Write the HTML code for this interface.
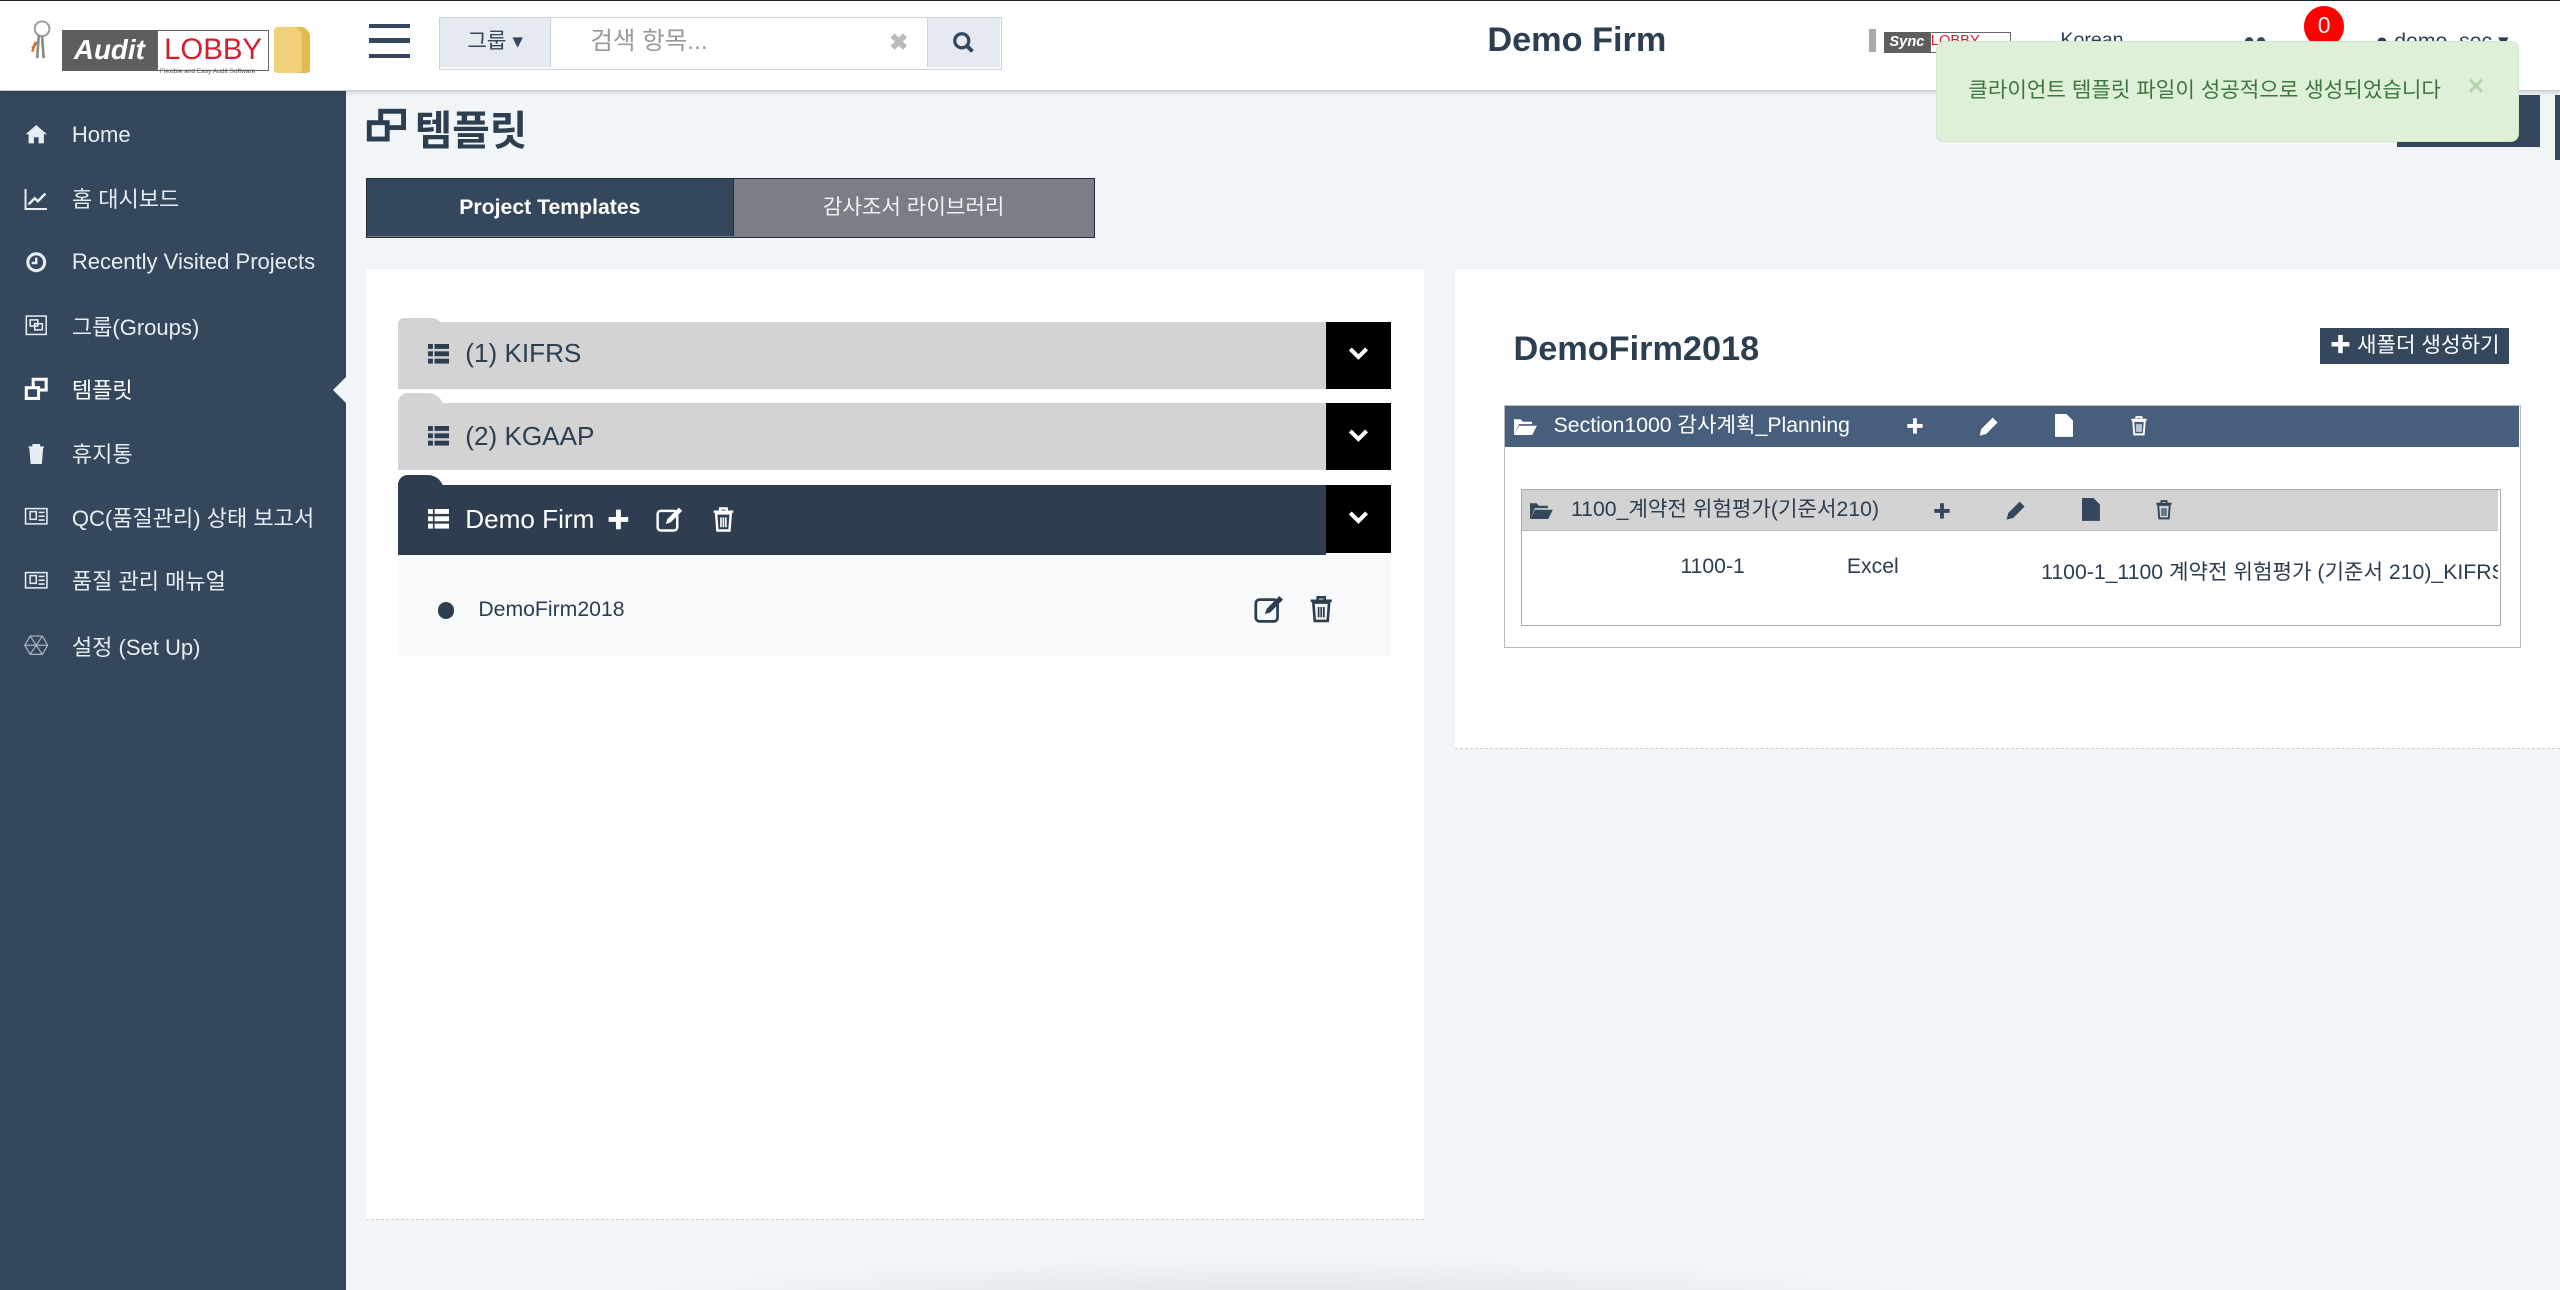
<!DOCTYPE html>
<html><head><meta charset="utf-8"><style>
*{box-sizing:border-box;margin:0;padding:0}
html,body{width:2560px;height:1290px;overflow:hidden;background:#f1f5f8}
#w{width:1568px;height:790px;zoom:1.63265;position:relative;font-family:"Liberation Sans","Noto Sans CJK KR",sans-serif;color:#2c3e50;background:#f1f5f8}
.abs{position:absolute}
#hdr{left:0;top:0;width:1568px;height:56px;background:#fff;border-top:1px solid #222;border-bottom:1px solid #ccc;box-shadow:0 1px 3px rgba(0,0,0,.15);z-index:3}
#side{left:0;top:56px;width:212px;height:734px;background:#34475c}
.nav{position:absolute;left:0;height:39px;width:212px;color:#e8edf2;font-size:13.5px;display:flex;align-items:center}
.nav .ic{width:44px;display:flex;justify-content:center;padding-left:0}
.nav .ic svg{width:15px;height:15px}
</style></head><body><div id="w">
<svg width="0" height="0" style="position:absolute"><defs>
<g id="lst"><rect x="0" y="0" width="3" height="3"/><rect x="4" y="0" width="9" height="3"/><rect x="0" y="4.5" width="3" height="3"/><rect x="4" y="4.5" width="9" height="3"/><rect x="0" y="9" width="3" height="3"/><rect x="4" y="9" width="9" height="3"/></g>
<g id="fold"><path d="M0 2h4l1.5 1.5H11V5H3L0 12z"/><path d="M3 6h11l-3 6H0z"/></g>
</defs></svg>
<div id="hdr" class="abs">
 <div class="abs" style="left:18px;top:11px;width:14px;height:26px">
  <svg width="14" height="26" viewBox="0 0 14 26"><circle cx="8" cy="6" r="4.5" fill="none" stroke="#999" stroke-width="1.2"/><path d="M6 10 L5 24 M8 11 L9 24 M5 14 L2 18" stroke="#888" stroke-width="1.6"/><path d="M2 20 L4 14" stroke="#e07020" stroke-width="1.5"/></svg></div>
 <div class="abs" style="left:38px;top:18px;width:58px;height:25px;background:#5e5e5e;color:#fff;font-weight:bold;font-style:italic;font-size:17px;line-height:25px;text-align:center">Audit</div>
 <div class="abs" style="left:96px;top:18px;width:69px;height:25px;border:1px solid #666;background:#fff;color:#d11f2f;font-size:18px;line-height:23px;text-align:center">LOBBY</div>
 <div class="abs" style="left:98px;top:41px;font-size:4px;color:#555">Flexible and Easy Audit Software</div>
 <div class="abs" style="left:168px;top:16px;width:22px;height:28px;background:#f1d07a;border-radius:2px 6px 2px 2px;box-shadow:inset -5px 0 0 #e2b954"></div>
 <div class="abs" style="left:226px;top:14px;width:25px;height:21px;border-top:3px solid #34475c;border-bottom:3px solid #34475c"><div style="margin-top:6px;height:3px;background:#34475c"></div></div>
 <div class="abs" style="left:269px;top:10px;width:345px;height:32px;border:1px solid #c8d3dc;background:#fff">
  <div class="abs" style="left:0;top:0;width:68px;height:30px;background:#e4eaf0;border-right:1px solid #c8d3dc;font-size:13px;line-height:30px;text-align:center;color:#34475c">그룹 ▾</div>
  <div class="abs" style="left:92px;top:0;font-size:15px;line-height:30px;color:#999">검색 항목...</div>
  <div class="abs" style="left:275px;top:0;font-size:14px;line-height:30px;color:#bbb;font-weight:bold">✖</div>
  <div class="abs" style="left:298px;top:0;width:45px;height:30px;background:#e4eaf0;border-left:1px solid #c8d3dc">
   <svg class="abs" style="left:15px;top:8px" width="14" height="14" viewBox="0 0 14 14"><circle cx="6" cy="6" r="4.3" fill="none" stroke="#34475c" stroke-width="2"/><path d="M9 9l3.5 3.5" stroke="#34475c" stroke-width="2.4"/></svg></div>
 </div>
 <div class="abs" style="left:911px;top:12px;font-size:21px;font-weight:bold;color:#2c3e50">Demo Firm</div>
 <div class="abs" style="left:1145px;top:17px;width:4px;height:14px;background:#aaa"></div>
 <div class="abs" style="left:1154px;top:19px;width:28px;height:13px;background:#5e5e5e;color:#fff;font-size:9px;font-style:italic;font-weight:bold;line-height:13px;text-align:center">Sync</div>
 <div class="abs" style="left:1182px;top:19px;width:50px;height:13px;border:1px solid #666;background:#fff;color:#d11f2f;font-size:9px;line-height:11px">LOBBY</div>
 <div class="abs" style="left:1262px;top:17px;font-size:12px;color:#2c3e50">Korean</div>
 <div class="abs" style="left:1374px;top:18px;font-size:12px;color:#34475c">●●</div>
 <div class="abs" style="left:1411px;top:3px;width:25px;height:25px;border-radius:50%;background:#f00;color:#fff;font-size:14px;text-align:center;line-height:24px">0</div>
 <div class="abs" style="left:1455px;top:17px;font-size:13px;color:#2c3e50">● demo_sec ▾</div>
</div>
<div class="abs" style="left:1186px;top:25px;width:357px;height:62px;background:#dff0d8;border:1px solid #d0e6c6;border-radius:5px;z-index:5">
 <div class="abs" style="left:19px;top:19px;font-size:13px;color:#3c763d">클라이언트 템플릿 파일이 성공적으로 생성되었습니다</div>
 <div class="abs" style="left:325px;top:17px;font-size:17px;color:#b5d3ac;font-weight:bold">×</div>
</div>
<div class="abs" style="left:1468px;top:58px;width:88px;height:32px;background:#34475c"></div>
<div class="abs" style="left:1565px;top:58px;width:3px;height:40px;background:#34475c"></div>

<div id="side" class="abs">
 <div class="nav" style="top:7px"><span class="ic"><svg viewBox="0 0 16 16"><path d="M1 8L8 2l7 6h-2v6h-3.5v-4h-3v4H3V8z" fill="#e8edf2"/></svg></span>Home</div>
 <div class="nav" style="top:46px"><span class="ic"><svg viewBox="0 0 16 16"><path d="M1 2v13h14" stroke="#e8edf2" fill="none" stroke-width="1.3"/><path d="M3 12l4-4 2 2 5-5" stroke="#e8edf2" fill="none" stroke-width="1.6"/></svg></span>홈 대시보드</div>
 <div class="nav" style="top:85px"><span class="ic"><svg viewBox="0 0 16 16"><circle cx="8" cy="8" r="5.5" stroke="#e8edf2" fill="none" stroke-width="2"/><path d="M8 5v3.5h-3" stroke="#e8edf2" fill="none" stroke-width="1.6"/></svg></span>Recently Visited Projects</div>
 <div class="nav" style="top:124px"><span class="ic"><svg viewBox="0 0 16 16"><rect x="1.5" y="2" width="13" height="12" stroke="#e8edf2" fill="none"/><rect x="4" y="4.5" width="5" height="4" stroke="#e8edf2" fill="none"/><rect x="7" y="7" width="5" height="4" stroke="#e8edf2" fill="none"/></svg></span>그룹(Groups)</div>
 <div class="nav" style="top:163px;color:#fff"><span class="ic"><svg viewBox="0 0 16 16"><rect x="6" y="1.5" width="8.5" height="7" stroke="#fff" fill="none" stroke-width="2"/><rect x="1.5" y="7" width="8" height="7" stroke="#fff" fill="#34475c" stroke-width="2"/></svg></span>템플릿</div>
 <div class="abs" style="left:204px;top:175px;width:0;height:0;border-top:8px solid transparent;border-bottom:8px solid transparent;border-right:8px solid #f1f5f8"></div>
 <div class="nav" style="top:202px"><span class="ic"><svg viewBox="0 0 16 16"><path d="M3 4h10M6 4V2.5h4V4M4 5h8l-.8 9.5H4.8z" stroke="#e8edf2" fill="#e8edf2" stroke-width="1"/></svg></span>휴지통</div>
 <div class="nav" style="top:241px"><span class="ic"><svg viewBox="0 0 16 16"><rect x="1" y="3" width="14" height="10" stroke="#e8edf2" fill="none"/><rect x="4" y="5" width="4" height="5" stroke="#e8edf2" fill="none"/><path d="M9.5 5.5h4M9.5 8h4M9.5 10.5h4" stroke="#e8edf2"/></svg></span>QC(품질관리) 상태 보고서</div>
 <div class="nav" style="top:280px"><span class="ic"><svg viewBox="0 0 16 16"><rect x="1" y="3" width="14" height="10" stroke="#e8edf2" fill="none"/><rect x="4" y="5" width="4" height="5" stroke="#e8edf2" fill="none"/><path d="M9.5 5.5h4M9.5 8h4M9.5 10.5h4" stroke="#e8edf2"/></svg></span>품질 관리 매뉴얼</div>
 <div class="nav" style="top:320px"><span class="ic"><svg viewBox="0 0 16 16"><path d="M4 2h8l3.5 6-3.5 6H4L.5 8z M4 2l8 12 M12 2L4 14 M.5 8h15" stroke="#a8b4c0" fill="none" stroke-width=".8"/></svg></span>설정 (Set Up)</div>
</div>

<svg class="abs" style="left:224px;top:66px" width="25" height="21" viewBox="0 0 25 21"><rect x="9" y="2" width="14" height="10" stroke="#2c3e50" fill="none" stroke-width="3"/><rect x="2" y="9" width="11" height="10" stroke="#2c3e50" fill="#f1f5f8" stroke-width="3"/></svg>
<div class="abs" style="left:254px;top:60px;font-size:25px;font-weight:bold;color:#2c3e50">템플릿</div>
<div class="abs" style="left:224px;top:109px;width:447px;height:37px;border:1px solid #1f2d3a;background:#7a7f87">
 <div class="abs" style="left:0;top:0;width:225px;height:35px;background:#34475c;border-right:1px solid #1f2d3a;color:#fff;font-size:13px;font-weight:bold;text-align:center;line-height:35px">Project Templates</div>
 <div class="abs" style="left:225px;top:0;width:220px;height:35px;color:#f1f1f1;font-size:13px;text-align:center;line-height:35px">감사조서 라이브러리</div>
</div>

<div class="abs" style="left:224px;top:165px;width:648px;height:582px;background:#fff;border-bottom:1px dashed #ccc">
 <div class="abs" style="left:20px;top:30px;width:28px;height:8px;background:#d3d3d3;border-radius:4px 8px 0 0"></div>
 <div class="abs" style="left:20px;top:32px;width:568px;height:41px;background:#d3d3d3"></div>
 <div class="abs" style="left:588px;top:32px;width:40px;height:41px;background:#000"></div>
 <svg class="abs" style="left:38px;top:46px" width="13" height="12" viewBox="0 0 13 12" fill="#2c3e50"><use href="#lst"/></svg>
 <div class="abs" style="left:61px;top:42px;font-size:16px;color:#2c3e50">(1) KIFRS</div>
 <div class="abs" style="left:20px;top:76px;width:28px;height:10px;background:#d3d3d3;border-radius:6px 10px 0 0"></div>
 <div class="abs" style="left:20px;top:82px;width:568px;height:41px;background:#d3d3d3"></div>
 <div class="abs" style="left:588px;top:82px;width:40px;height:41px;background:#000"></div>
 <svg class="abs" style="left:38px;top:96px" width="13" height="12" viewBox="0 0 13 12" fill="#2c3e50"><use href="#lst"/></svg>
 <div class="abs" style="left:61px;top:93px;font-size:16px;color:#2c3e50">(2) KGAAP</div>
 <div class="abs" style="left:20px;top:126px;width:28px;height:12px;background:#2e3e50;border-radius:6px 10px 0 0"></div>
 <div class="abs" style="left:20px;top:132px;width:568px;height:43px;background:#2e3e50"></div>
 <div class="abs" style="left:588px;top:132px;width:40px;height:42px;background:#000"></div>
 <svg class="abs" style="left:38px;top:147px" width="13" height="12" viewBox="0 0 13 12" fill="#fff"><use href="#lst"/></svg>
 <div class="abs" style="left:61px;top:144px;font-size:16px;color:#fff">Demo Firm</div>
 <svg class="abs" style="left:148px;top:146px" width="14" height="14" viewBox="0 0 14 14"><path d="M7 1v12M1 7h12" stroke="#fff" stroke-width="3"/></svg>
 <svg class="abs" style="left:178px;top:145px" width="18" height="16" viewBox="0 0 18 16"><rect x="1" y="3" width="12" height="12" rx="2" stroke="#fff" fill="none" stroke-width="1.5"/><path d="M6 11l1-3 7-7 2 2-7 7z" fill="#fff"/></svg>
 <svg class="abs" style="left:212px;top:145px" width="14" height="16" viewBox="0 0 14 16"><path d="M1 3.5h12M5 3.5V1.5h4v2M2.5 4.5h9l-.8 10.5H3.3z" stroke="#fff" fill="none" stroke-width="1.5"/><path d="M5.5 7v6M7 7v6M8.5 7v6" stroke="#fff"/></svg>
 <svg class="abs" style="left:601px;top:46px" width="14" height="12" viewBox="0 0 14 12"><path d="M2 3l5 5 5-5" stroke="#fff" fill="none" stroke-width="2.5"/></svg>
 <svg class="abs" style="left:601px;top:96px" width="14" height="12" viewBox="0 0 14 12"><path d="M2 3l5 5 5-5" stroke="#fff" fill="none" stroke-width="2.5"/></svg>
 <svg class="abs" style="left:601px;top:146px" width="14" height="12" viewBox="0 0 14 12"><path d="M2 3l5 5 5-5" stroke="#fff" fill="none" stroke-width="2.5"/></svg>
 <div class="abs" style="left:20px;top:175px;width:608px;height:62px;background:#f7f9fb">
  <div class="abs" style="left:24px;top:29px;width:10px;height:10px;border-radius:50%;background:#2c3e50"></div>
  <div class="abs" style="left:49px;top:26px;font-size:13px;color:#2c3e50">DemoFirm2018</div>
  <svg class="abs" style="left:524px;top:24px" width="20" height="18" viewBox="0 0 18 16"><rect x="1" y="3" width="12" height="12" rx="2" stroke="#2c3e50" fill="none" stroke-width="1.5"/><path d="M6 11l1-3 7-7 2 2-7 7z" fill="#2c3e50"/></svg>
  <svg class="abs" style="left:558px;top:24px" width="15" height="18" viewBox="0 0 14 16"><path d="M1 3.5h12M5 3.5V1.5h4v2M2.5 4.5h9l-.8 10.5H3.3z" stroke="#2c3e50" fill="none" stroke-width="1.5"/><path d="M5.5 7v6M7 7v6M8.5 7v6" stroke="#2c3e50"/></svg>
 </div>
</div>

<div class="abs" style="left:891px;top:165px;width:677px;height:294px;background:#fff;border-bottom:1px dashed #ccc">
 <div class="abs" style="left:36px;top:37px;font-size:21px;font-weight:bold;color:#2c3e50">DemoFirm2018</div>
 <div class="abs" style="left:530px;top:36px;width:116px;height:22px;background:#34475c;color:#fff;font-size:13px;line-height:22px;text-align:center"><b>✚</b> 새폴더 생성하기</div>
 <div class="abs" style="left:30px;top:83px;width:623px;height:149px;border:1px solid #bbb">
  <div class="abs" style="left:0;top:0;width:621px;height:25px;background:#475f7c;color:#fff;font-size:13px;line-height:25px">
   <svg class="abs" style="left:6px;top:6px" width="14" height="12" viewBox="0 0 14 12" fill="#fff"><use href="#fold"/></svg>
   <span class="abs" style="left:30px">Section1000 감사계획_Planning</span>
   <svg class="abs" style="left:246px;top:7px" width="11" height="11" viewBox="0 0 14 14"><path d="M7 1v12M1 7h12" stroke="#fff" stroke-width="3"/></svg>
   <svg class="abs" style="left:290px;top:6px" width="13" height="13" viewBox="0 0 13 13"><path d="M1 12l1-4 7-7 3 3-7 7z" fill="#fff"/></svg>
   <svg class="abs" style="left:337px;top:5px" width="11" height="14" viewBox="0 0 11 14"><path d="M0 0h7l4 4v10H0z" fill="#fff"/></svg>
   <svg class="abs" style="left:383px;top:5px" width="11" height="14" viewBox="0 0 14 16"><path d="M1 3.5h12M5 3.5V1.5h4v2M2.5 4.5h9l-.8 10.5H3.3z" stroke="#fff" fill="none" stroke-width="1.5"/><path d="M5.5 7v6M7 7v6M8.5 7v6" stroke="#fff"/></svg>
  </div>
  <div class="abs" style="left:10px;top:51px;width:600px;height:84px;border:1px solid #aaa;background:#fff">
   <div class="abs" style="left:0;top:0;width:598px;height:25px;background:#d3d3d3;border-bottom:1px solid #bbb;font-size:13px;line-height:24px;color:#2c3e50">
    <svg class="abs" style="left:5px;top:6px" width="14" height="12" viewBox="0 0 14 12" fill="#34475c"><use href="#fold"/></svg>
    <span class="abs" style="left:30px">1100_계약전 위험평가(기준서210)</span>
    <svg class="abs" style="left:252px;top:7px" width="11" height="11" viewBox="0 0 14 14"><path d="M7 1v12M1 7h12" stroke="#34475c" stroke-width="3"/></svg>
    <svg class="abs" style="left:296px;top:6px" width="13" height="13" viewBox="0 0 13 13"><path d="M1 12l1-4 7-7 3 3-7 7z" fill="#34475c"/></svg>
    <svg class="abs" style="left:343px;top:5px" width="11" height="14" viewBox="0 0 11 14"><path d="M0 0h7l4 4v10H0z" fill="#34475c"/></svg>
    <svg class="abs" style="left:388px;top:5px" width="11" height="14" viewBox="0 0 14 16"><path d="M1 3.5h12M5 3.5V1.5h4v2M2.5 4.5h9l-.8 10.5H3.3z" stroke="#34475c" fill="none" stroke-width="1.5"/><path d="M5.5 7v6M7 7v6M8.5 7v6" stroke="#34475c"/></svg>
   </div>
   <div class="abs" style="left:97px;top:40px;font-size:13px">1100-1</div>
   <div class="abs" style="left:199px;top:40px;font-size:13px">Excel</div>
   <div class="abs" style="left:318px;top:40px;font-size:13px;white-space:nowrap;width:280px;overflow:hidden">1100-1_1100 계약전 위험평가 (기준서 210)_KIFRS_KGAAP</div>
  </div>
 </div>
</div>
<div class="abs" style="left:360px;top:770px;width:850px;height:30px;background:radial-gradient(ellipse at center bottom,rgba(0,0,0,.08),rgba(0,0,0,0) 70%)"></div>
</div></body></html>
